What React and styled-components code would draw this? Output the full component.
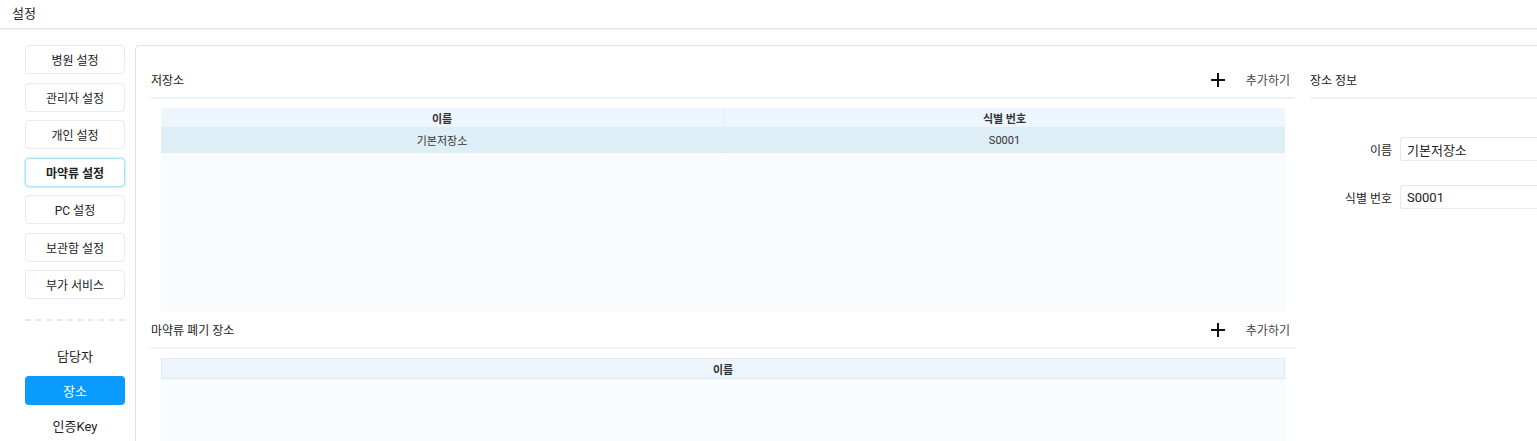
import React from "react";
import styled, { createGlobalStyle } from "styled-components";

const GlobalStyle = createGlobalStyle`
  html, body {
    margin: 0;
    padding: 0;
    background: #ffffff;
    font-family: Roboto, "Noto Sans CJK KR", sans-serif;
    color: #222;
  }
  * { box-sizing: border-box; }
`;

const Page = styled.div`
  width: 100vw;
  height: 100vh;
  overflow: hidden;
  display: flex;
  flex-direction: column;
`;

const TopBar = styled.header`
  height: 29px;
  flex: none;
  display: flex;
  align-items: center;
  padding-left: 12px;
  padding-bottom: 3px;
  font-size: 13px;
  color: #222;
  border-bottom: 1px solid #e3e3ea;
  box-shadow: 0 1px 1px rgba(0, 0, 0, 0.03);
`;

const Body = styled.div`
  flex: 1;
  display: flex;
  padding-top: 16px;
  min-height: 0;
`;

const Sidebar = styled.nav`
  width: 135px;
  flex: none;
  padding: 0 10px 0 25px;
  display: flex;
  flex-direction: column;
`;

const MenuButton = styled.div`
  flex: none;
  height: 29px;
  margin-bottom: 8.5px;
  display: flex;
  align-items: center;
  justify-content: center;
  font-size: 12px;
  font-weight: ${(p) => (p.$active ? 700 : 400)};
  color: #222;
  border: 1px solid ${(p) => (p.$active ? "#a9e2fb" : "#e4eaef")};
  box-shadow: ${(p) => (p.$active ? "0 0 0 1px #d6f1fd" : "none")};
  border-radius: 4px;
  background: #fff;
`;

const Dashed = styled.div`
  flex: none;
  margin: 11.5px 0 20px;
  border-top: 2px dashed #e6e8ec;
`;

const SubItem = styled.div`
  flex: none;
  height: 29px;
  margin-bottom: 6px;
  display: flex;
  align-items: center;
  justify-content: center;
  font-size: 13px;
  border-radius: 4px;
  color: ${(p) => (p.$active ? "#fff" : "#222")};
  background: ${(p) => (p.$active ? "#0b9afe" : "transparent")};
`;

const Card = styled.section`
  flex: none;
  width: 1600px;
  border: 1px solid #dfe1e8;
  border-right: none;
  border-bottom: none;
  border-radius: 5px 0 0 0;
  padding: 16px 0 0 15px;
  display: flex;
  gap: 15px;
`;

const Column = styled.div`
  width: ${(p) => p.$width}px;
  flex: none;
  display: flex;
  flex-direction: column;
`;

const SectionHeader = styled.div`
  height: 37px;
  flex: none;
  display: flex;
  align-items: center;
  justify-content: space-between;
  padding-right: 5px;
  border-bottom: 2px solid #eef2f6;
  font-size: 12px;
  color: #222;
`;

const AddButton = styled.div`
  display: flex;
  align-items: center;
  gap: 21px;
  font-size: 12px;
  color: #444;
`;

const Table = styled.div`
  margin: 9px 10px 0;
  background: #fafbfd;
  display: flex;
  flex-direction: column;
  ${(p) => (p.$height ? `height: ${p.$height}px; flex: none;` : "flex: 1;")}
`;

const Row = styled.div`
  flex: none;
  display: grid;
  grid-template-columns: repeat(${(p) => p.$cols}, 1fr);
  height: ${(p) => (p.$head ? 19 : 26)}px;
  background: ${(p) => (p.$head ? "#edf6fd" : "#deeef7")};
  ${(p) => p.$boxed && "border: 1px solid #dfeaf2; height: 21px;"}
`;

const Cell = styled.div`
  display: flex;
  align-items: center;
  justify-content: center;
  font-size: 11px;
  font-weight: ${(p) => (p.$head ? 700 : 400)};
  color: #333;
  & + & {
    border-left: 1px solid #e2ebf1;
  }
`;

const Form = styled.div`
  padding-top: 38px;
  display: flex;
  flex-direction: column;
  gap: 24px;
`;

const Field = styled.label`
  display: flex;
  align-items: center;
  gap: 8px;
`;

const FieldLabel = styled.span`
  width: 82px;
  text-align: right;
  font-size: 12px;
  color: #222;
`;

const FieldInput = styled.div`
  flex: 1;
  height: 24px;
  border: 1px solid #e3e8ee;
  border-right: none;
  border-radius: 3px 0 0 3px;
  display: flex;
  align-items: center;
  padding-left: 6px;
  font-size: 13px;
  color: #222;
`;

const PlusIcon = () => (
  <svg width="14" height="14" viewBox="0 0 14 14">
    <path d="M7 0v14M0 7h14" stroke="#111" strokeWidth="2" />
  </svg>
);

const menus = ["병원 설정", "관리자 설정", "개인 설정", "마약류 설정", "PC 설정", "보관함 설정", "부가 서비스"];
const subs = ["담당자", "장소", "인증Key"];

export default function App() {
  return (
    <Page>
      <GlobalStyle />
      <TopBar>설정</TopBar>
      <Body>
        <Sidebar>
          {menus.map((m) => (
            <MenuButton key={m} $active={m === "마약류 설정"}>{m}</MenuButton>
          ))}
          <Dashed />
          {subs.map((s) => (
            <SubItem key={s} $active={s === "장소"}>{s}</SubItem>
          ))}
        </Sidebar>
        <Card>
          <Column $width={1144}>
            <SectionHeader>
              저장소
              <AddButton><PlusIcon />추가하기</AddButton>
            </SectionHeader>
            <Table $height={204}>
              <Row $head $cols={2}>
                <Cell $head>이름</Cell>
                <Cell $head>식별 번호</Cell>
              </Row>
              <Row $cols={2}>
                <Cell>기본저장소</Cell>
                <Cell>S0001</Cell>
              </Row>
            </Table>
            <SectionHeader>
              마약류 폐기 장소
              <AddButton><PlusIcon />추가하기</AddButton>
            </SectionHeader>
            <Table>
              <Row $head $boxed $cols={1}>
                <Cell $head>이름</Cell>
              </Row>
            </Table>
          </Column>
          <Column $width={320}>
            <SectionHeader>장소 정보</SectionHeader>
            <Form>
              <Field>
                <FieldLabel>이름</FieldLabel>
                <FieldInput>기본저장소</FieldInput>
              </Field>
              <Field>
                <FieldLabel>식별 번호</FieldLabel>
                <FieldInput>S0001</FieldInput>
              </Field>
            </Form>
          </Column>
        </Card>
      </Body>
    </Page>
  );
}
